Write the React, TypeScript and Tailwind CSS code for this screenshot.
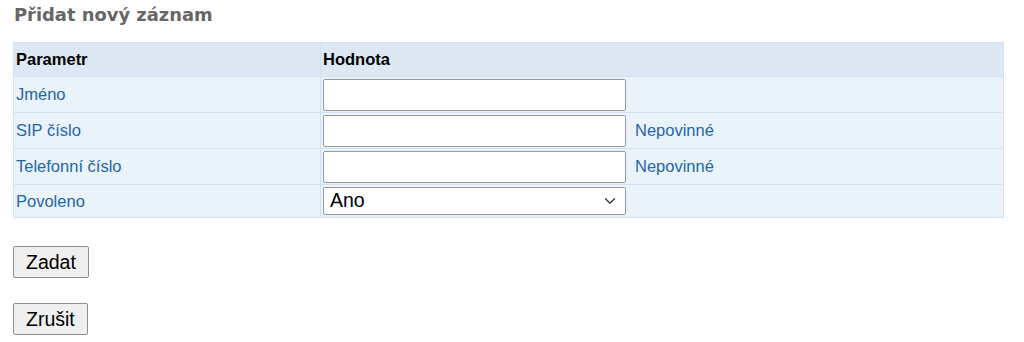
import { ChevronDown } from "lucide-react";

const rows = [
  { label: "Jméno", kind: "input", note: "" },
  { label: "SIP číslo", kind: "input", note: "Nepovinné" },
  { label: "Telefonní číslo", kind: "input", note: "Nepovinné" },
];

export default function App() {
  return (
    <main className="min-h-[342px] bg-white pl-[13px] pt-[4px] font-['Liberation_Sans',Arial,sans-serif]">
      <h1 className="h-[21px] pl-[1px] font-['DejaVu_Sans',Verdana,sans-serif] text-[17.9px] font-bold leading-[21px] text-[#666666]">
        Přidat nový záznam
      </h1>

      <table className="mt-[17px] w-[991px] border-collapse border border-[#d3e2f2] text-[16.5px]">
        <thead>
          <tr className="h-[34px] bg-[#dde8f4] text-left text-black">
            <th className="w-[307px] border border-[#d3e2f2] px-[2px] font-bold">Parametr</th>
            <th className="border border-[#d3e2f2] px-[2px] font-bold">Hodnota</th>
          </tr>
        </thead>
        <tbody className="bg-[#eaf2fa] text-[#1f67a8]">
          {rows.map((r) => (
            <tr key={r.label} className="h-[36px]">
              <td className="border border-[#d3e2f2] px-[2px]">{r.label}</td>
              <td className="border border-[#d3e2f2] px-[2px] py-[1px]">
                <div className="flex items-center">
                  <input
                    type="text"
                    className="h-[32px] w-[303px] rounded-[2px] border border-[#9a9a9a] bg-white px-[3px] text-[19px] text-black outline-none"
                  />
                  {r.note && <span className="ml-[9px]">{r.note}</span>}
                </div>
              </td>
            </tr>
          ))}
          <tr className="h-[33px]">
            <td className="border border-[#d3e2f2] px-[2px]">Povoleno</td>
            <td className="border border-[#d3e2f2] px-[2px] py-[1px]">
              <div className="flex h-[28px] w-[303px] items-center justify-between rounded-[2px] border border-[#9a9a9a] bg-white pl-[6px] pr-[6px] text-[19.5px] text-black">
                <span>Ano</span>
                <ChevronDown size={18} strokeWidth={1.6} className="text-[#333333]" />
              </div>
            </td>
          </tr>
        </tbody>
      </table>

      <div className="mt-[28px] flex flex-col items-start gap-[25px]">
        <button className="h-[32px] rounded-[2px] border border-[#8f8f8f] bg-[#efefef] px-[12px] text-[19.5px] leading-[22px] text-black">
          Zadat
        </button>
        <button className="h-[32px] rounded-[2px] border border-[#8f8f8f] bg-[#efefef] px-[12px] text-[19.5px] leading-[22px] text-black">
          Zrušit
        </button>
      </div>
    </main>
  );
}
